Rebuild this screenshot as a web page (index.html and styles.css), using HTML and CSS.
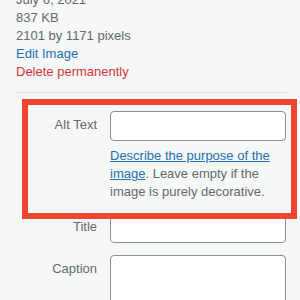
FILE: index.html
```html
<!DOCTYPE html>
<html>
<head>
  <title>Attachment Details</title>
  <link rel="stylesheet" href="styles.css">
</head>
<body>
  <div class="details">
    <div class="meta">
      <div>July 6, 2021</div>
      <div>837 KB</div>
      <div>2101 by 1171 pixels</div>
      <a class="edit" href="#">Edit Image</a>
      <a class="delete" href="#">Delete permanently</a>
    </div>

    <div class="settings">
      <label for="alt">Alt Text</label>
      <div class="field">
        <input type="text" id="alt">
        <p class="help"><a href="#">Describe the purpose of the image</a>. Leave empty if the image is purely decorative.</p>
      </div>

      <label for="title">Title</label>
      <div class="field">
        <input type="text" id="title">
      </div>

      <label for="caption">Caption</label>
      <div class="field">
        <textarea id="caption"></textarea>
      </div>
    </div>

    <div class="highlight"></div>
  </div>
</body>
</html>
```

FILE: styles.css
```css
body {
  margin: 0;
  background-color: #f6f7f7;
  color: #646970;
  font-family: "Liberation Sans", Arial, sans-serif;
  font-size: 13px;
  line-height: 18px;
  overflow: hidden;
}

.details {
  position: relative;
  margin-top: -9px;
}

.meta {
  display: flex;
  flex-direction: column;
  align-items: flex-start;
  margin: 0 13px 11px 16px;
  padding-bottom: 11px;
  border-bottom: 1px solid #dcdcde;
}

.meta a {
  text-decoration: none;
}

.edit {
  color: #2271b1;
}

.delete {
  color: #d63638;
}

.settings {
  display: grid;
  grid-template-columns: 81px 176px;
  column-gap: 13px;
  row-gap: 12px;
  padding: 7px 0 0 16px;
}

.settings label {
  text-align: right;
  padding-top: 5px;
  color: #646970;
}

.field input,
.field textarea {
  display: block;
  box-sizing: border-box;
  width: 176px;
  height: 30px;
  margin: 0;
  border: 1px solid #8c8f94;
  border-radius: 4px;
  background: #fff;
}

.field textarea {
  height: 70px;
  resize: none;
}

.help {
  margin: 6px 0 0;
  color: #646970;
}

.help a {
  color: #2271b1;
}

.highlight {
  position: absolute;
  left: 22px;
  top: 108px;
  width: 275px;
  height: 120px;
  box-sizing: border-box;
  border: 6px solid #ee4430;
}
```
